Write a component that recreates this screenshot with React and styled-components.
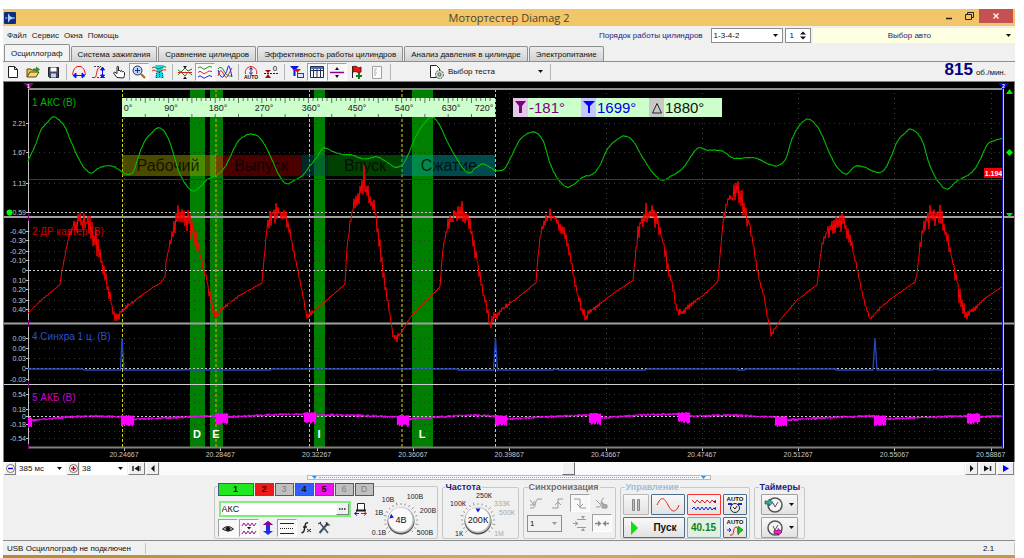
import React from 'react';
import { useState } from 'react';
import styled, { createGlobalStyle } from 'styled-components';

const GlobalStyle = createGlobalStyle`
* { box-sizing: border-box; }
body {
margin: 0;
background: #fff;
font-family: "Liberation Sans", Arial, sans-serif;
font-size: 8px;
color: #111;
}
button, select, input { font: inherit; color: inherit; }
`;

const Page = styled.div`
padding: 9px 9px 0 3px;
`;
const Window = styled.div`
background: #f0f0f0;
`;
const TitleBar = styled.header`
display: grid;
grid-template-columns: 1fr auto 1fr;
align-items: center;
height: 17px;
background: #f0c668;
`;
const TitleIcon = styled.div`
display: flex;
padding-left: 1px;
`;
const Title = styled.h1`
margin: 0;
font-family: "Open Sans", "Noto Sans", sans-serif;
font-size: 11px;
line-height: 16px;
font-weight: 400;
color: #4c432b;
`;
const WindowButtons = styled.div`
display: flex;
justify-content: flex-end;
align-self: start;
padding-right: 2px;
`;
const WindowButton = styled.button`
display: flex;
align-items: center;
justify-content: center;
width: ${props => props.$close ? '34px' : '20px'};
height: 14px;
padding: 0;
border: 0;
background: ${props => props.$close ? '#c75050' : 'transparent'};
`;

const MenuBar = styled.div`
display: flex;
align-items: center;
height: 18px;
`;
const Menu = styled.nav`
display: flex;
flex: 1;
gap: 5px;
padding-left: 4px;
`;
const MenuItem = styled.a`
color: #222;
text-decoration: none;
`;
const OrderLabel = styled.label`
margin-right: 8px;
color: #1c1c80;
`;
const ComboBox = styled.div`
display: grid;
align-items: center;
width: ${props => props.$width};
height: ${props => props.$height || '15px'};
border: ${props => props.$flat ? '0' : '1px solid #8c8c8c'};
background: ${props => props.$disabled ? '#f0f0f0' : '#fff'};
& > * { grid-area: 1 / 1; }
& > svg { justify-self: end; margin-right: 4px; pointer-events: none; }
`;
const ComboSelect = styled.select`
appearance: none;
width: 100%;
height: 100%;
padding: 0 2px;
border: 0;
outline: 0;
background: transparent;
font-size: 8px;
`;
const Spin = styled.div`
display: flex;
align-items: center;
justify-content: flex-end;
width: 26px;
height: 15px;
margin: 0 2px;
padding-right: 4px;
border: 1px solid #8c8c8c;
background: #fff;
`;
const SpinInput = styled.input`
width: 12px;
padding: 0 2px;
border: 0;
outline: 0;
background: transparent;
`;
const CarButton = styled.button`
display: flex;
align-items: center;
width: 20%;
height: 15px;
padding: 0 4px 0 0;
border: 0;
background: #ffffe1;
color: #1c1c80;
span { flex: 1; }
`;

const Tabs = styled.div`
display: flex;
align-items: flex-end;
gap: 1px;
height: 17px;
padding-left: 1px;
`;
const Tab = styled.button`
height: ${props => props.$active ? '17px' : '15px'};
padding: 0 6px;
border: 1px solid #8e8f8f;
border-bottom: 0;
border-radius: 2px 2px 0 0;
background: ${props => props.$active ? '#f4f4f4' : 'linear-gradient(#ececec, #d2d2d2)'};
white-space: nowrap;
`;
const Toolbar = styled.div`
display: flex;
align-items: center;
height: 20px;
border-top: 1px solid #8e8f8f;
`;
const ToolButton = styled.button`
display: flex;
align-items: center;
justify-content: center;
width: ${props => props.$width || '20px'};
height: ${props => props.$height || '18px'};
padding: 0;
border: 1px solid;
border-color: ${props => props.$pressed ? '#a0a0a0 #fff #fff #a0a0a0' : 'transparent'};
background: ${props => props.$pressed ? '#f8f8f8' : 'transparent'};
`;
const Separator = styled.div`
width: 1px;
height: 16px;
margin: 0 2px 0 3px;
background: #b4b4b4;
`;
const TestButton = styled.button`
display: flex;
align-items: center;
gap: 3px;
width: 118px;
height: 18px;
margin-left: 36px;
padding: 0 4px 0 0;
border: 0;
background: transparent;
span { flex: 1; text-align: left; }
`;
const Rpm = styled.div`
display: flex;
align-items: baseline;
gap: 3px;
margin-left: auto;
padding-right: 9px;
font-size: 9px;
line-height: 16px;
strong { font-size: 17px; color: #000080; }
em { font-style: normal; font-size: 8px; }
`;

const ScopeFrame = styled.main`
border: 1px solid #808080;
border-bottom: 0;
background: #000;
`;
const ScopeSvg = styled.svg`
display: block;
width: 100%;
height: auto;
font-family: "Liberation Sans", Arial, sans-serif;
`;

const ScrollRow = styled.div`
display: flex;
align-items: stretch;
gap: 1px;
height: 13px;
padding: 0 1px;
`;
const SmallButton = styled.button`
display: flex;
align-items: center;
justify-content: center;
width: ${props => props.$width};
padding: 0;
border: 1px solid;
border-color: #fff #808080 #808080 #fff;
background: #f0f0f0;
`;
const Track = styled.div`
display: flex;
flex: 1;
background: #fafafa;
`;
const Thumb = styled.div`
width: 13px;
margin-left: 50%;
border: 1px solid;
border-color: #fff #707070 #707070 #fff;
background: #f0f0f0;
`;
const Splitter = styled.div`
display: flex;
align-items: center;
justify-content: space-between;
width: 40%;
height: 5px;
margin: 0 auto;
padding: 0 4px;
border: 1px solid #b8b8b8;
background: #f4f8fc;
`;
const DottedLine = styled.div`
flex: 1;
margin: 0 2px;
border-top: 1px dotted #6cb0e8;
`;

const Panels = styled.section`
display: flex;
justify-content: center;
gap: 4px;
height: 61px;
padding-top: 2px;
border-bottom: 1px solid #8c8c8c;
`;
const ChannelPanel = styled.div`
display: flex;
width: 224px;
height: 53px;
margin-top: 4px;
padding-left: 3px;
border: 1px solid #c8c8c8;
border-radius: 2px;
`;
const ChannelColumn = styled.div`
width: 152px;
`;
const ChannelRow = styled.div`
display: flex;
gap: 1px;
margin-top: -4px;
`;
const ChannelButton = styled.button`
flex: none;
width: ${props => props.$wide ? '36px' : '19px'};
height: 13px;
padding: 0;
border: 1px solid #3c6080;
background: ${props => props.$color};
color: ${props => props.$off ? '#808080' : '#101010'};
font-size: 9px;
line-height: 9px;
font-weight: ${props => props.$off ? 400 : 700};
`;
const NameRow = styled.div`
display: flex;
align-items: center;
gap: 1px;
margin: 5px 0 2px 1px;
`;
const NameBox = styled.div`
display: flex;
width: 132px;
height: 16px;
border: 2px solid #7cf07c;
background: #fff;
`;
const NameInput = styled.input`
flex: 1;
min-width: 0;
padding: 0 1px;
border: 0;
outline: 0;
font-size: 9px;
`;
const IconRow = styled.div`
display: flex;
gap: 1px;
`;
const Group = styled.fieldset`
width: ${props => props.$width};
height: 57px;
min-width: 0;
margin: 0;
padding: 0 ${props => props.$pad || '2px'};
border: 1px solid #c8c8c8;
border-radius: 2px;
`;
const Legend = styled.legend`
padding: 0 1px;
margin-left: ${props => props.$inset || '2px'};
color: ${props => props.$color};
font-size: 9px;
line-height: 10px;
font-weight: 700;
`;
const KnobSvg = styled.svg`
display: block;
flex: none;
font-family: "Liberation Sans", Arial, sans-serif;
`;
const SyncGrid = styled.div`
display: grid;
grid-template-columns: repeat(4, 20px);
gap: 2px;
justify-content: center;
padding-top: 2px;
`;
const WideCell = styled.div`
grid-column: span 2;
padding-left: 1px;
align-self: center;
`;
const ControlGrid = styled.div`
display: grid;
grid-template-columns: 26px 34px 34px 24px;
gap: 2px;
padding-top: 2px;
`;
const PushButton = styled.button`
display: flex;
align-items: center;
justify-content: ${props => props.$spread ? 'space-around' : 'center'};
grid-column: span ${props => props.$span || 1};
height: 21px;
padding: 0;
border: 1px solid ${props => props.$border || '#4c6c8c'};
border-radius: 1px;
background: ${props => props.$tint || 'linear-gradient(#f8f8f8, #e2e2e2)'};
color: ${props => props.$text || '#111'};
font-size: 10px;
font-weight: 700;
`;
const TimerStack = styled.div`
display: grid;
gap: 2px;
padding-top: 2px;
`;

const StatusBar = styled.footer`
display: flex;
align-items: center;
height: 14px;
font-size: 8px;
`;
const StatusCell = styled.div`
flex: ${props => props.$grow ? 1 : 'none'};
width: ${props => props.$width || 'auto'};
padding: 0 4px;
border-right: 1px solid #c4c4c4;
line-height: 11px;
white-space: nowrap;
`;
const Desktop = styled.div`
height: 3px;
background: linear-gradient(90deg, #b48a34, #c8ac64 50%, #bc9c4c);
`;

// ---- trace data -------------------------------------------------------

const GREEN = '28,161 35,146 41,130 47,123 53,117 59,120 65,127 70,139 76,153 83,166 91,173 97,169 106,166 115,167 126,174 133,172 138,158 142,147 146,139 150,135 157,128 163,130 168,138 173,152 179,172 187,186 193,191 200,187 208,179 217,175 225,167 230,157 237,143 243,137 251,134 260,138 266,147 273,162 280,177 287,184 293,181 303,175 310,166 317,157 323,148 332,151 340,154 352,155 364,159 377,157 387,162 394,167 402,165 408,155 415,138 423,125 432,117 440,126 448,143 457,159 468,173 477,167 483,164 490,167 497,171 505,168 512,155 519,141 527,134 533,132 538,134 544,143 550,163 558,179 567,187 573,185 583,177 593,174 600,165 607,150 615,141 625,136 633,141 643,158 653,173 662,180 673,175 683,168 692,155 698,148 707,150 722,151 733,158 755,158 771,165 780,165 786,158 792,139 799,126 808,119 816,125 822,135 829,152 837,167 846,174 854,167 861,166 876,172 884,170 891,157 897,142 906,132 910,129 917,133 923,143 929,163 937,180 947,189 957,181 971,173 979,162 987,145 994,141 1003,138';

// x,y,noise
const RED = '28,313,0 45,297,1 60,285,1 62,270,2 68,240,3 72,228,7 78,221,11 88,224,12 92,230,14 98,247,12 103,268,8 110,297,8 115,318,4 119,315,5 124,309,3 142,295,1 160,283,1 165,277,1 166,262,2 170,243,5 175,222,12 179,211,14 185,217,12 190,224,14 197,243,8 203,267,4 207,280,6 213,312,6 216,317,6 227,305,2 240,295,1 262,283,1 263,270,2 267,227,6 272,213,11 285,212,12 290,233,5 298,272,3 307,317,3 310,314,3 327,300,1 345,284,1 347,247,3 351,217,5 355,200,9 360,192,12 364,181,18 368,192,12 375,210,10 380,247,8 385,285,8 389,307,5 393,337,3 397,338,4 402,331,1 412,315,1 427,300,1 440,287,1 441,274,1 443,247,3 448,224,6 457,213,14 465,213,11 472,234,10 480,276,7 484,298,6 490,323,8 496,315,6 500,311,4 517,298,1 536,283,1 537,268,1 540,237,3 545,220,8 552,216,9 558,222,8 565,235,10 570,253,6 574,277,5 578,297,5 585,317,6 589,312,5 594,309,3 607,298,1 633,280,1 635,260,3 638,233,8 643,216,14 653,213,12 658,222,10 663,243,10 670,276,6 678,314,6 682,313,4 693,303,2 707,292,1 718,281,1 719,267,1 723,223,5 727,201,8 733,197,10 738,187,13 743,203,14 750,227,7 759,279,3 764,297,3 771,334,5 774,331,3 780,320,1 797,300,1 817,285,1 819,268,1 822,243,3 827,232,10 834,222,11 844,224,13 851,242,6 858,273,2 864,300,4 870,320,2 877,311,2 893,297,1 915,282,1 917,273,3 920,247,6 924,227,8 931,213,14 941,218,14 947,237,8 957,280,10 960,297,12 966,316,5 975,308,3 987,297,1 1003,286,0';

const BLUE = 'M28 369H82L84 370H120.500L122 338L124 370H180L188 369.500L196 370H270L272 369H458V370H493.500L495.500 338L497.500 370H553L555 369L560 370H645L647 369H738V370H745V369H836V370H873L875 338L877 370H932L935 369L940 370H1003';

const BATTERY = '28,421 67,417 97,416 121,417 133,419 166,418 207,416 216,416 230,417 267,415 300,414 317,415 340,415 373,416 397,417 408,419 440,417 467,415 495,416 507,419 547,417 588,415 601,418 640,415 678,414 690,416 730,415 773,417 787,420 840,417 873,416 886,419 967,416 980,417 1003,416';
const BURSTS = [[28, 31, 418], [121, 133, 416], [216, 227, 414], [304, 315, 413], [397, 408, 416], [495, 506, 416], [589, 600, 414], [678, 689, 413], [775, 786, 417], [874, 885, 416], [967, 979, 414]];

const parse = (text) => text.split(' ').map(p => p.split(',').map(Number));

// small repeatable generator so that the noise is the same on every render
const makeRandom = (seed) => () => {
    seed = (seed * 16807) % 2147483647;
    return seed / 2147483647;
};

const smoothTrace = (text) => {
    const p = parse(text);
    const random = makeRandom(11);
    let d = `M${p[0][0]} ${p[0][1]}`;
    for(let i = 0; i < p.length - 1; i++) {
        const a = p[i - 1] || p[i], b = p[i], c = p[i + 1], e = p[i + 2] || c;
        for(let x = b[0] + 1; x <= c[0]; x++) {
            const t = (x - b[0]) / (c[0] - b[0]);
            const m1 = (c[1] - a[1]) / (c[0] - a[0]) * (c[0] - b[0]);
            const m2 = (e[1] - b[1]) / (e[0] - b[0]) * (c[0] - b[0]);
            const y = (2*t*t*t - 3*t*t + 1) * b[1] + (t*t*t - 2*t*t + t) * m1 + (3*t*t - 2*t*t*t) * c[1] + (t*t*t - t*t) * m2;
            d += `L${x} ${(y + (random() - 0.5) * 0.8).toFixed(1)}`;
        }
    }
    return d;
};

const noisyTrace = (text, fallback, step) => {
    const p = parse(text);
    const random = makeRandom(77);
    let d = `M${p[0][0]} ${p[0][1]}`;
    let sign = 1;
    for(let i = 0; i < p.length - 1; i++) {
        const [x1, y1, n1 = fallback] = p[i];
        const [x2, y2, n2 = fallback] = p[i + 1];
        for(let x = x1 + step; x <= x2; x += step) {
            const t = (x - x1) / (x2 - x1);
            const noise = (n1 + (n2 - n1) * t) * random() * sign;
            d += `L${x} ${(y1 + (y2 - y1) * t + noise).toFixed(1)}`;
            sign = -sign;
        }
    }
    return d;
};

const burstPath = () => {
    const random = makeRandom(5);
    return BURSTS.map(([from, to, top]) => {
        let d = '';
        for(let x = from; x <= to; x++) {
            d += `M${x + 0.5} ${(top - random()).toFixed(1)}V${(top + 8 + random() * 3).toFixed(1)}`;
        }
        return d;
    }).join('');
};

const TIMES = ['20.24667', '20.28467', '20.32267', '20.36067', '20.39867', '20.43667', '20.47467', '20.51267', '20.55067', '20.58867'];
const LEVELS = [
    [123, '2.21'], [152, '1.67'], [183, '1.13'], [212, '0.59', true],
    [231, '-0.40'], [240, '-0.30'], [251, '-0.20'], [260, '-0.10'], [270, '0', true],
    [280, '0.10'], [289, '0.20'], [300, '0.30'], [309, '0.40'],
    [338, '0.09'], [348, '0.06'], [358, '0.03'], [368, '0', true], [379, '-0.03'],
    [394, '0.54'], [402, ''], [409, '0.18'], [416, '0', true], [424, '-0.18'], [431, ''], [438, '-0.54'],
];
const BANDS = [[190, 15, 'D', 197], [210, 13, 'E', 216], [314, 11, 'I', 319], [412, 21, 'L', 422]];
const PHASES = [
    [122, 101, '#969600', 'Рабочий', 168], [216, 86, '#960000', 'Выпуск', 261],
    [302, 26, '#005050', '', 0], [328, 74, '#008000', 'Впуск', 365], [402, 93, '#009696', 'Сжатие', 449],
];
const ANGLES = [['0°', 128], ['90°', 171], ['180°', 218], ['270°', 264], ['360°', 311], ['450°', 357], ['540°', 404], ['630°', 451], ['720°', 484]];
const CHANNELS = [[102, '1 АКС (В)', '#00b400'], [231, '2 ДР картер (В)', '#d00000'], [336, '4 Синхра 1 ц. (В)', '#2850d0'], [397, '5 АКБ (В)', '#c800c8']];

const rulerTicks = () => {
    let d = '';
    for(let i = 1; i < 80; i++) {
        d += `M${(122 + i * 4.66).toFixed(1)} 98v${i % 5 === 0 ? 5 : 3}`;
        if(i % 5 === 0) d += `m0 11v3`;
    }
    return d;
};

const Readout = ({ x, width, tint, color, text, children }) => (
    <g>
        <rect x={x} y="98" width={width} height="19" fill="#ccffcc" />
        <rect x={x} y="98" width="15" height="19" fill={tint} />
        {children}
        <text x={x + 16} y="113" fontSize="15" fill={color}>{text}</text>
    </g>
);

const Scope = () => (
    <ScopeSvg viewBox="4 82 1010 380" role="img" aria-label="Осциллограмма">
        <rect x="4" y="82" width="1010" height="380" fill="#000" />
        {BANDS.map(([x, w]) => <rect key={x} x={x} y="89" width={w} height="358" fill="#008000" />)}
        {TIMES.map((t, i) => (
            <g key={t}>
                <path d={`M${Math.round(124 + i * 96.3) + 0.5} 93V447`} stroke="#404040" strokeDasharray="1 4" />
                <path d={`M${Math.round(124 + i * 96.3) + 0.5} 448v3`} stroke="#c0c0c0" />
                <text x={124 + i * 96.3} y="457" fontSize="7" fill="#c8c8c8" textAnchor="middle">{t}</text>
            </g>
        ))}
        {LEVELS.map(([y, label, zero], i) => (
            <g key={i}>
                <path d={`M29 ${y + 0.5}H1003`} stroke={zero ? '#c8c8c8' : '#343434'} strokeDasharray={zero ? '2 2' : '1 4'} />
                {label && <path d={`M26 ${y + 0.5}h3`} stroke="#c0c0c0" />}
                <text x="26" y={y + 3} fontSize="7" fill="#c8c8c8" textAnchor="end">{label}</text>
            </g>
        ))}
        <circle cx="9.500" cy="212.500" r="3" fill="#00ff00" />

        <path d="M122.500 89V447M309.500 89V447M495.500 89V447" stroke="#d8d800" strokeDasharray="3 2" />
        <path d="M216 89V447M402 89V447" stroke="#a0a000" strokeOpacity=".7" strokeWidth="2" strokeDasharray="3 2" />

        <path d="M28 89H1003" stroke="#909090" strokeWidth="2" />
        <path d="M4 217H1014M4 323.500H1014" stroke="#a0a0a0" strokeWidth="2" />
        <path d="M4 384.500H1014" stroke="#d0d0d0" />
        <path d="M28 447.500H1004" stroke="#808080" strokeWidth="2" />
        <path d="M28.500 89V448" stroke="#c0c0c0" />
        <path d="M28.500 213v8M28.500 320v7M28.500 381v7M28.500 444v5" stroke="#800080" />

        {CHANNELS.map(([y, name, color]) => (
            <text key={name} x="32" y={y + 4} fontSize="10" fill={color}>{name}</text>
        ))}

        {PHASES.map(([x, w, color, name, cx]) => (
            <g key={x}>
                <rect x={x} y="155" width={w} height="21" fill={color} fillOpacity=".5" />
                <text x={cx} y="171" fontSize="16" fill="#000" fillOpacity=".75" textAnchor="middle">{name}</text>
            </g>
        ))}

        <path d={smoothTrace(GREEN)} fill="none" stroke="#00c000" strokeWidth="1.100" />
        <path d={noisyTrace(RED, 0, 1)} fill="none" stroke="#ff0000" strokeWidth="1" />
        <path d={BLUE} fill="none" stroke="#2448c0" strokeWidth="1.300" />
        <path d={noisyTrace(BATTERY, 1.4, 0.5)} fill="none" stroke="#f000f0" strokeWidth="1" />
        <path d={burstPath()} stroke="#ff00ff" strokeWidth="1.200" />
        <path d="M29 179.500H1003" stroke="#c00000" />

        {BANDS.map(([x, w, letter, cx]) => (
            <text key={x} x={cx} y="438" fontSize="11" fontWeight="700" fill="#fff" textAnchor="middle">{letter}</text>
        ))}

        <rect x="122" y="98" width="373" height="19" fill="#ccffcc" />
        <path d={rulerTicks()} stroke="#303030" strokeWidth=".7" />
        {ANGLES.map(([a, x]) => <text key={a} x={x} y="111" fontSize="9" fill="#222" textAnchor="middle">{a}</text>)}

        <Readout x={513} width={68} tint="#e4c8e8" color="#800080" text="-181°">
            <path d="M515 101h11l-4 5v7h-3v-7z" fill="#800080" />
        </Readout>
        <Readout x={581} width={68} tint="#c4c8ff" color="#0000e8" text="1699°">
            <path d="M583 101h12l-5 5v7h-2v-7z" fill="#0000ff" />
        </Readout>
        <Readout x={649} width={73} tint="#c8c8c8" color="#111" text="1880°">
            <path d="M652.500 113L657 103.500L661.500 113z" fill="none" stroke="#222" />
        </Readout>

        <rect x="984" y="168" width="19" height="10" fill="#f00000" />
        <text x="993.500" y="176" fontSize="7" fontWeight="700" fill="#fff" textAnchor="middle">1.194</text>
        <path d="M1002.500 88V448" stroke="#1010c0" />
        <path d="M1003.500 88V448" stroke="#c8c8ff" />

        <path d="M23 83h11l-5 6z" fill="#800080" />
        <path d="M998 83h11l-5.500 6z" fill="#0000ff" />
        <text x="28.500" y="88" fontSize="5" fontWeight="700" fill="#fff" textAnchor="middle">1</text>
        <text x="1003.500" y="88" fontSize="5" fontWeight="700" fill="#fff" textAnchor="middle">2</text>
        <path d="M1006 94l3.500-5l3.500 5zM1009.500 149l3.500 3.500l-3.500 3.500l-3.500-3.500zM1006 213h7l-3.500 4z" fill="#00f000" />
    </ScopeSvg>
);

// ---- icons ------------------------------------------------------------

const Icon = ({ w = 16, h = 16, children }) => (
    <svg width={w} height={h} viewBox={`0 0 ${w} ${h}`} fill="none" stroke="#222" aria-hidden="true">{children}</svg>
);
const Arrow = ({ color = '#111' }) => (
    <svg width="5" height="3" viewBox="0 0 5 3" aria-hidden="true"><path d="M0 0h5L2.500 3z" fill={color} /></svg>
);

const NewIcon = () => <Icon><path d="M3.500 2.500h6l3 3v8h-9zM9.500 2.500v3h3" fill="#fff" /></Icon>;
const OpenIcon = () => <Icon><path d="M2 13V5h4l1 1h5v2" fill="#e0c050" stroke="#604800" /><path d="M2 13l3-5h9l-3 5z" fill="#f0d878" stroke="#604800" /><path d="M8 4.500h3v-2l4 3l-4 3v-2H8z" fill="#209020" stroke="none" /></Icon>;
const SaveIcon = () => <Icon><path d="M3.500 3.500h10v10h-9l-1-1z" fill="#404a70" /><rect x="5.500" y="3.500" width="6" height="4" fill="#fff" stroke="none" /><rect x="6" y="9.500" width="5" height="4" fill="#c8d0e0" stroke="none" /></Icon>;
const WidthIcon = () => <Icon><path d="M1.500 11C2 9 2 5 6 2.500h4c4 2.500 4 6.500 4.500 8.500" stroke="#f01010" /><path d="M2 11.500h12M5 9l-3 2.500L5 14zM11 9l3 2.500L11 14z" stroke="#1010ff" fill="#1010ff" /></Icon>;
const HeightIcon = () => <Icon><path d="M1 13.500h3C6 13 5 4 9 3" stroke="#f01010" /><path d="M3 2.500h7M6 13.500h8" stroke="#444" strokeDasharray="2 1" /><path d="M11.500 4v9M9.500 6l2-3l2 3zM9.500 11l2 3l2-3z" stroke="#1010ff" fill="#1010ff" /></Icon>;
const HandIcon = () => <Icon><path d="M6 13.500L2.500 9l1-1L6 9.500V3c0-1 1.500-1 1.500 0v4l1-1l1 1.500l1-1l1 1.500l1-.5l1 1v3l-1 2.500z" fill="#fff" /></Icon>;
const ZoomIcon = () => <Icon><circle cx="6.500" cy="6.500" r="4.500" fill="#b8d8ff" stroke="#203060" /><path d="M4 6.500h5M6.500 4v5" stroke="#203060" /><path d="M10 10l4 4" stroke="#a06820" strokeWidth="2" /></Icon>;
const FilterIcon = () => <Icon><path d="M4 1h9l-2 6l2 7H4l2-7z" fill="#10d8e8" stroke="none" /><path d="M1 4q2-2 4 0t5 0t5-1" stroke="#208020" /><path d="M1 7q2-2 4 0t5 0t5-1" stroke="#e02020" /><path d="M5.500 9v5M8.500 8v6M11.500 9v5" stroke="#333" strokeDasharray="1 1" /></Icon>;
const CenterIcon = () => <Icon><path d="M1 6l3 2l4-4l3 3l4-2" stroke="#208020" /><path d="M1 11l3-3l4 4l3-4l4 3" stroke="#208020" /><path d="M1 8.500h14" stroke="#d02020" /><path d="M6 2h4l-2 2.500zM6 15h4l-2-2.500z" fill="#111" stroke="none" /></Icon>;
const WavesIcon = () => <Icon><path d="M1 4q2-2.500 4 0t4.500 0T15 3" stroke="#209020" /><path d="M1 8.500q2-2.500 4 0t4.500 0T15 7.500" stroke="#e02020" /><path d="M1 13q2-2.500 4 0t4.500 0t5.500-.5" stroke="#2020e0" /></Icon>;
const CrossWavesIcon = () => <Icon><path d="M1 5q3-4 6 2t8 5" stroke="#209020" /><path d="M1 12q2-9 5-3t4 4t5-9" stroke="#e02020" /><path d="M1 6q3 10 6 6t4-9t4 10" stroke="#2020e0" /></Icon>;
const AutoIcon = () => <Icon><path d="M2.500 10c-1-3 1-7 5.500-7.500c4.500.5 6.500 4.500 5.500 7.500" stroke="#f01010" /><path d="M8 4v6M6.500 5.500L8 3.500l1.500 2M6.500 8.500L8 10.500l1.500-2" stroke="#1020a0" /><text x="8" y="15" fontSize="5" fontWeight="700" fill="#111" stroke="none" textAnchor="middle">AUTO</text></Icon>;
const ZeroIcon = () => <Icon><path d="M2 6h6L5 9zM2 14h6l-3-4z" fill="#a01010" stroke="none" /><path d="M1 9.500h14" stroke="#222" strokeDasharray="2 1" /><text x="12" y="7" fontSize="8" fill="#111" stroke="none" textAnchor="middle">0</text></Icon>;
const MarkersIcon = () => <Icon><path d="M1 2h9L6.500 6v6h-2V6z" fill="#1010e0" stroke="none" /><path d="M4 5h8L9 8v4H8V8z" fill="#e01010" stroke="none" /><rect x="8.500" y="9.500" width="6" height="4" fill="#dde4ff" stroke="#304080" /></Icon>;
const TableIcon = () => <Icon><path d="M1.500 2.500h13v11h-13zM1.500 6.500h13M4.500 5v8.500M8 5v8.500M11.500 5v8.500" stroke="#203050" /><path d="M2 3h12v2H2z" fill="#5870a0" stroke="none" /></Icon>;
const LevelIcon = () => <Icon><path d="M1 8.500h14" stroke="#900090" strokeWidth="1.500" /><path d="M6 6l2-3l2 3zM6 11l2 3l2-3z" fill="#111" stroke="none" /></Icon>;
const FlagIcon = () => <Icon><path d="M3.500 2v12" /><path d="M4 3q2-2 4 0t4 0v5q-2 1-4 0t-4 0z" fill="#e01818" stroke="#801010" /><path d="M7 12h6M10 9v6" stroke="#108010" strokeWidth="2" /></Icon>;
const ReportIcon = () => <Icon><path d="M3.500 2.500h9v12h-9z" fill="#fafafa" stroke="#a0a0a0" /><path d="M5 5h3M5 7h2M5 9h3M5 11h2" stroke="#b0b0b0" /></Icon>;
const TestIcon = () => <Icon><path d="M1.500 1.500h6l3 3v9h-9z" fill="#fff" /><circle cx="10.500" cy="10.500" r="4" fill="#d0dcd0" stroke="#405040" strokeDasharray="2 1" /><circle cx="10.500" cy="10.500" r="1.500" stroke="#405040" /></Icon>;

const TOOLS = [
    ['Новый', NewIcon], ['Открыть', OpenIcon], ['Сохранить', SaveIcon], null,
    ['Ширина', WidthIcon], ['Высота', HeightIcon], ['Рука', HandIcon], ['Лупа', ZoomIcon, true], ['Фильтр', FilterIcon], null,
    ['Центр', CenterIcon], ['Каналы', WavesIcon, true], ['Наложение', CrossWavesIcon], null,
    ['Авто', AutoIcon], ['Ноль', ZeroIcon], null,
    ['Маркеры', MarkersIcon], ['Таблица', TableIcon, true], ['Уровень', LevelIcon, true], ['Флаг', FlagIcon], ['Отчёт', ReportIcon], null,
];

const TABS = ['Осциллограф', 'Система зажигания', 'Сравнение цилиндров', 'Эффективность работы цилиндров', 'Анализ давления в цилиндре', 'Электропитание'];

// dial with scale labels, pointer angle in degrees from the top
const Knob = ({ width, cx, cy, value, pointer, labels }) => (
    <KnobSvg width={width} height="51" viewBox={`0 0 ${width} 51`}>
        {Array.from({ length: 19 }, (_, i) => (
            <path key={i} d={`M${cx} ${cy - 15}v${i % 4 === 0 ? -3 : -2}`} stroke="#888" strokeWidth=".8" transform={`rotate(${-135 + i * 15} ${cx} ${cy})`} />
        ))}
        <circle cx={cx} cy={cy + 1} r="13.500" fill="#505050" />
        <circle cx={cx} cy={cy} r="13" fill="#bcbcbc" />
        <circle cx={cx - 0.5} cy={cy - 0.5} r="12" fill="#fafafa" />
        <path d={`M${cx - 2.5} ${cy - 11.5}h5l-2.500 4z`} fill="#1818e0" transform={`rotate(${pointer} ${cx} ${cy})`} />
        <text x={cx} y={cy + 3} fontSize="9" textAnchor="middle" fill="#111">{value}</text>
        {labels.map(([x, y, text, off]) => (
            <text key={text} x={x} y={y} fontSize="7" textAnchor="middle" fill={off ? '#a8a8a8' : '#222'}>{text}</text>
        ))}
    </KnobSvg>
);

const ClockIcon = ({ pink }) => (
    <Icon w={20} h={18}>
        <circle cx="11" cy="9" r="7" stroke="#555" strokeWidth="1.500" fill="#f4f4f4" />
        <path d="M9 7l2 4l3-5" stroke="#555" />
        {pink
            ? <path d="M10 11.500h4v-2l4 3.500l-4 3.500v-2h-4z" fill="#f020d0" stroke="#601050" strokeWidth=".7" />
            : <path d="M1 5h4V3l4 3.500L5 10V8H1z" fill="#30b0a8" stroke="#105050" strokeWidth=".7" />}
    </Icon>
);

const App = () => {
    const [tab, setTab] = useState(0);
    const [name, setName] = useState('АКС');
    const [cylinder, setCylinder] = useState('1');

  return (
    <Page>
        <GlobalStyle />
        <Window>
            <TitleBar>
                <TitleIcon>
                    <svg width="12" height="12" viewBox="0 0 12 12"><rect width="12" height="12" rx="1" fill="#102c80" /><path d="M1 6h2.500M9 6h2" stroke="#90c8ff" /><path d="M4 1.500v9L5.500 9V8l4.500-2l-4.500-2V3z" fill="#a8d8ff" /></svg>
                </TitleIcon>
                <Title>Мотортестер Diamag 2</Title>
                <WindowButtons>
                    <WindowButton aria-label="Свернуть"><Icon w={8} h={8}><path d="M1 6.500h6" strokeWidth="1.500" /></Icon></WindowButton>
                    <WindowButton aria-label="Восстановить"><Icon w={9} h={8}><path d="M2.500 2.500v-2h6v5h-2M.5 2.500h6v5h-6z" /></Icon></WindowButton>
                    <WindowButton $close aria-label="Закрыть"><Icon w={6} h={6}><path d="M.5.5l5 5M5.500.5l-5 5" stroke="#fff" strokeWidth="1.300" /></Icon></WindowButton>
                </WindowButtons>
            </TitleBar>

            <MenuBar>
                <Menu>
                    {['Файл', 'Сервис', 'Окна', 'Помощь'].map(item => <MenuItem key={item} href="#">{item}</MenuItem>)}
                </Menu>
                <OrderLabel htmlFor="order">Порядок работы цилиндров</OrderLabel>
                <ComboBox $width="72px">
                    <ComboSelect id="order"><option>1-3-4-2</option><option>1-2-4-3</option></ComboSelect>
                    <Arrow />
                </ComboBox>
                <Spin>
                    <SpinInput aria-label="Цилиндр" value={cylinder} onChange={e => setCylinder(e.target.value)} />
                    <svg width="6" height="9" viewBox="0 0 6 9"><path d="M0 3.500h6L3 .5zM0 5.500h6l-3 3z" fill="#111" /></svg>
                </Spin>
                <CarButton><span>Выбор авто</span><Arrow /></CarButton>
            </MenuBar>

            <Tabs role="tablist">
                {TABS.map((title, i) => (
                    <Tab key={title} role="tab" aria-selected={tab === i} $active={tab === i} onClick={() => setTab(i)}>{title}</Tab>
                ))}
            </Tabs>
            <Toolbar>
                {TOOLS.map((tool, i) => {
                    if(!tool) return <Separator key={i} />;
                    const [title, ToolIcon, pressed] = tool;
                    return <ToolButton key={i} aria-label={title} $pressed={pressed}><ToolIcon /></ToolButton>;
                })}
                <TestButton><TestIcon /><span>Выбор теста</span><Arrow /></TestButton>
                <Separator />
                <Rpm><strong>815</strong><em>об./мин.</em></Rpm>
            </Toolbar>

            <ScopeFrame><Scope /></ScopeFrame>

            <ScrollRow>
                <SmallButton $width="12px" aria-label="Меньше"><Icon w={9} h={9}><circle cx="4.500" cy="4.500" r="4" fill="#fff" stroke="#555" strokeWidth=".8" /><path d="M2 4.500h5" stroke="#1010c0" strokeWidth="1.500" /></Icon></SmallButton>
                <ComboBox $width="49px" $height="13px" $flat>
                    <ComboSelect aria-label="Развёртка"><option>385 мс</option></ComboSelect>
                    <Arrow />
                </ComboBox>
                <SmallButton $width="12px" aria-label="Больше"><Icon w={9} h={9}><circle cx="4.500" cy="4.500" r="4" fill="#fff" stroke="#555" strokeWidth=".8" /><path d="M2 4.500h5M4.500 2v5" stroke="#c01010" strokeWidth="1.500" /></Icon></SmallButton>
                <ComboBox $width="47px" $height="13px" $flat>
                    <ComboSelect aria-label="Кадр"><option>38</option></ComboSelect>
                    <Arrow />
                </ComboBox>
                <SmallButton $width="17px" aria-label="В начало"><Icon w={9} h={7}><path d="M1 1v5" strokeWidth="1.500" /><path d="M7 .5v6L2.500 3.500z" fill="#111" stroke="none" /><path d="M8 1v5" /></Icon></SmallButton>
                <SmallButton $width="13px" aria-label="Назад"><Icon w={5} h={7}><path d="M4.500 0v7L1 3.500z" fill="#111" stroke="none" /></Icon></SmallButton>
                <Track><Thumb /></Track>
                <SmallButton $width="13px" aria-label="Вперёд"><Icon w={5} h={7}><path d="M1 0v7l3.500-3.500z" fill="#111" stroke="none" /></Icon></SmallButton>
                <SmallButton $width="17px" aria-label="В конец"><Icon w={9} h={7}><path d="M1 .5v6l5-3z" fill="#111" stroke="none" /><path d="M7.500 1v5" strokeWidth="1.500" /></Icon></SmallButton>
                <SmallButton $width="17px" aria-label="Воспроизвести"><Icon w={7} h={7}><path d="M1 0v7l6-3.500z" fill="#0000ff" stroke="none" /></Icon></SmallButton>
            </ScrollRow>
            <Splitter><Arrow color="#3090e0" /><DottedLine /><Arrow color="#3090e0" /></Splitter>

            <Panels>
                <ChannelPanel>
                    <ChannelColumn>
                        <ChannelRow>
                            <ChannelButton $wide $color="#20e820">1</ChannelButton>
                            <ChannelButton $color="#f01818">2</ChannelButton>
                            <ChannelButton $off $color="#c0c0c0">3</ChannelButton>
                            <ChannelButton $color="#3060ff">4</ChannelButton>
                            <ChannelButton $color="#f010f0">5</ChannelButton>
                            <ChannelButton $off $color="#c0c0c0">6</ChannelButton>
                            <ChannelButton $off $color="#c0c0c0">D</ChannelButton>
                        </ChannelRow>
                        <NameRow>
                            <NameBox>
                                <NameInput aria-label="Имя канала" value={name} onChange={e => setName(e.target.value)} />
                                <SmallButton $width="13px" aria-label="Выбрать"><Icon w={7} h={2}><path d="M0 1h7" strokeDasharray="1.500 1" strokeWidth="1.500" /></Icon></SmallButton>
                            </NameBox>
                            <Icon><path d="M5.500 2.500h7v7h-7z" fill="#fff" /><path d="M4 9.500h10" strokeWidth="2" /><path d="M7 12.500H3m2-2l-2.500 2L5 14.500" stroke="#1010e0" /><path d="M9 12.500h5m-2-2l2.500 2l-2.500 2" stroke="#e01010" /></Icon>
                        </NameRow>
                        <IconRow>
                            <ToolButton $pressed aria-label="Показать"><Icon><path d="M2.500 9q5-5 11 0q-5 4-11 0z" fill="#bbb" /><circle cx="8" cy="9" r="2" fill="#111" /></Icon></ToolButton>
                            <ToolButton $pressed aria-label="Сигнал"><Icon><path d="M1 6l2-3l2 3l2-3l2 3l2-3l2 3l2-3" stroke="#a010a0" /><path d="M6 7h4l-2 2.500z" fill="#111" stroke="none" /><path d="M1 14l2-3l2 3l2-3l2 3l2-3l2 3l2-3" stroke="#a010a0" /></Icon></ToolButton>
                            <ToolButton $width="16px" aria-label="Масштаб"><Icon w={12}><path d="M6 1l5 4H8v6h3l-5 4l-5-4h3V5H1z" fill="#1830f0" stroke="none" /><path d="M6 1l5 4H1z" fill="#900090" stroke="none" /></Icon></ToolButton>
                            <ToolButton $pressed aria-label="Линии"><Icon><path d="M1 3.500h14M1 13.500h14" /><path d="M1 8.500h14" strokeDasharray="1 1" /></Icon></ToolButton>
                            <ToolButton $width="17px" aria-label="Функция"><Icon w={12}><path d="M8 3C5 2 5 6 4.500 9S3 13 1.500 12.500M3 7h4" strokeWidth="1.500" /><path d="M7 9l4 3M11 9l-4 3" /></Icon></ToolButton>
                            <ToolButton $width="17px" aria-label="Настройки"><Icon w={14}><path d="M3 3l8 10" strokeWidth="1.500" stroke="#405070" /><path d="M11 3L2.500 13" stroke="#405070" strokeWidth="2" /><path d="M9 2l1 3l3 0M1 4l3-2" /></Icon></ToolButton>
                        </IconRow>
                    </ChannelColumn>
                    <Knob width={68} cx={31} cy={33} value="4В" pointer={-70} labels={[[18, 15, '10В'], [45, 12, '100В'], [9, 28, '1В'], [58, 26, '200В'], [9, 48, '0.1В'], [55, 48, '500В']]} />
                </ChannelPanel>

                <Group $width="77px" $pad="0">
                    <Legend $color="#1c1c80">Частота</Legend>
                    <Knob width={75} cx={35} cy={28} value="200К" pointer={0} labels={[[15, 14, '100К'], [41, 6, '250К'], [59, 14, '333К', true], [64, 23, '500К', true], [16, 44, '1К'], [56, 44, '1М', true]]} />
                </Group>

                <Group $width="93px">
                    <Legend $color="#707070">Синхронизация</Legend>
                    <SyncGrid>
                        <ToolButton aria-label="Фронт"><Icon><path d="M2 13h3C8 13 7 4 10 4h4M2 5l4 5M6 6v4H2" stroke="#999" /></Icon></ToolButton>
                        <ToolButton aria-label="По росту"><Icon><path d="M2 13h6V4h5M5 10l3-3l3 3" stroke="#999" /></Icon></ToolButton>
                        <ToolButton $pressed aria-label="По спаду"><Icon><path d="M2 4h6v9h6M5 9l3 3l3-3" stroke="#999" /></Icon></ToolButton>
                        <ToolButton aria-label="Вручную"><Icon><path d="M2 12h3C8 12 6 4 10 3M2 5l4 4" stroke="#999" /><path d="M8 13V7l1 2l4 1v3z" stroke="#999" fill="#aaa" /></Icon></ToolButton>
                        <WideCell>
                            <ComboBox $width="35px" $height="17px" $disabled>
                                <ComboSelect aria-label="Канал синхронизации"><option>1</option></ComboSelect>
                                <Arrow color="#999" />
                            </ComboBox>
                        </WideCell>
                        <ToolButton aria-label="Уровень"><Icon><path d="M1 8.500h5M5 4.500h9M5 12.500h9M3 6.500l3 2l-3 2" stroke="#999" /><path d="M9 1h4l-2 3zM9 16h4l-2-3z" fill="#999" stroke="none" /></Icon></ToolButton>
                        <ToolButton $pressed aria-label="Сжать"><Icon><path d="M1 8.500h5M15 8.500h-5" stroke="#888" strokeWidth="1.500" /><path d="M4 5.500l3.500 3l-3.500 3zM12 5.500l-3.500 3l3.500 3z" fill="#888" stroke="none" /></Icon></ToolButton>
                    </SyncGrid>
                </Group>

                <Group $width="130px">
                    <Legend $color="#9cbcdc">Управление</Legend>
                    <ControlGrid>
                        <PushButton $border="#b8b8b8" aria-label="Пауза"><Icon w={10} h={12}><path d="M1.500.5h2v11h-2zM6.500.5h2v11h-2z" fill="#bbb" stroke="#888" /></Icon></PushButton>
                        <PushButton aria-label="Один канал"><Icon w={24} h={16}><path d="M1 8C5-1 8 0 12 8s8 8 11 0" stroke="#e02020" /></Icon></PushButton>
                        <PushButton $border="#ff3030" aria-label="Все каналы"><Icon w={26} h={16}><path d="M1 3l3 3l2-3l3 3l2-3l3 3l2-3l3 3l2-3l3 3" stroke="#e02020" /><path d="M1 12l2-2l2 3l2-3l2 3l2-3l2 3l2-3l2 3l2-3l2 3l2-2" stroke="#2020e0" /><path d="M25 3v3l-3-1.500zM25 10v3l-3-1.500z" fill="#2020a0" stroke="none" /></Icon></PushButton>
                        <PushButton aria-label="Авто масштаб"><Icon w={18} h={18}><text x="9" y="5" fontSize="6" fill="#111" stroke="none" textAnchor="middle">AUTO</text><circle cx="9" cy="12" r="4.500" /><path d="M2 8h4M12 8h4" stroke="#2020e0" strokeWidth="2" /><path d="M7 11l2 2l2-3" /></Icon></PushButton>
                        <PushButton $span={2} $spread><Icon w={9} h={14}><path d="M1 0v14l7-7z" fill="#10e010" stroke="none" /></Icon><span>Пуск</span></PushButton>
                        <PushButton $border="#80a8d0" $tint="#e0f0e4" $text="#108010">40.15</PushButton>
                        <PushButton aria-label="Авто пуск"><Icon w={18} h={18}><text x="9" y="5" fontSize="6" fill="#111" stroke="none" textAnchor="middle">AUTO</text><path d="M4 16h2c2 0 1-8 4-8s1 8 3 8" stroke="#e02020" /><path d="M1 11h4M3 9l2 2l-2 2" stroke="#2020e0" /><path d="M12 7v8l5-4z" fill="#10d010" stroke="#106010" strokeWidth=".6" /></Icon></PushButton>
                    </ControlGrid>
                </Group>

                <Group $width="51px" $pad="6px">
                    <Legend $color="#1c1c80" $inset="-2px">Таймеры</Legend>
                    <TimerStack>
                        <PushButton $spread $border="#a0a0a0" aria-label="Таймер пуска"><ClockIcon /><Arrow /></PushButton>
                        <PushButton $spread $border="#a0a0a0" aria-label="Таймер остановки"><ClockIcon pink /><Arrow /></PushButton>
                    </TimerStack>
                </Group>
            </Panels>

            <StatusBar>
                <StatusCell $width="143px">USB Осциллограф не подключен</StatusCell>
                <StatusCell $grow />
                <StatusCell $width="36px">2.1</StatusCell>
            </StatusBar>
        </Window>
        <Desktop />
    </Page>
  )
};

export default App;
